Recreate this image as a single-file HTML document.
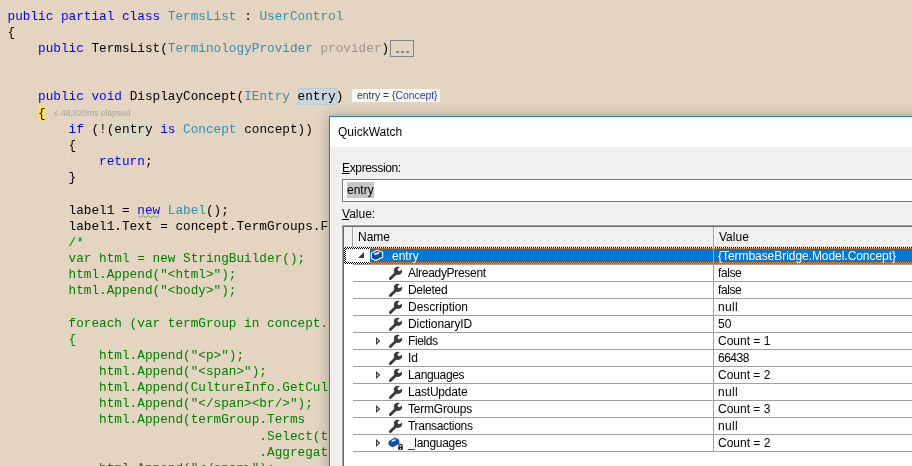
<!DOCTYPE html><html><head><meta charset="utf-8"><style>

html,body{margin:0;padding:0;width:912px;height:466px;overflow:hidden;background:#e3d5c1;}
.code{position:absolute;left:0;top:0;width:912px;height:466px;}
.ln{position:absolute;left:7.5px;font-family:"Liberation Mono",monospace;font-size:12.73px;line-height:16.125px;height:16.125px;white-space:pre;color:#000;}
.sans{font-family:"Liberation Sans",sans-serif;}
.abs{position:absolute;}

</style></head><body>
<svg width="0" height="0" style="position:absolute"><defs><mask id="wm" maskUnits="userSpaceOnUse" x="0" y="0" width="20" height="18"><rect width="20" height="18" fill="#fff"/><circle cx="13.2" cy="5.6" r="1.6" fill="#000"/><path d="M12.4 4.6 L15.2 1.2 L18.5 4.2 L14.4 6.6 Z" fill="#000"/></mask></defs></svg>
<div class="code">
<div class="abs" style="left:298px;top:88px;width:39px;height:17px;background:#c9d7dc;box-shadow:inset 0 0 0 1px #bccbd3"></div>
<div class="abs" style="left:38px;top:105px;width:8px;height:16px;background:#fbe26c"></div>
<div class="abs" style="left:114px;top:121px;width:38px;height:16px;background:#dcdac6"></div>
<div class="abs" style="left:10px;top:42px;width:1px;height:424px;background:repeating-linear-gradient(#cacdd1 0 2px, transparent 2px 5px)"></div>
<div class="abs" style="left:41px;top:122px;width:1px;height:344px;background:repeating-linear-gradient(#cacdd1 0 2px, transparent 2px 5px)"></div>
<div class="abs" style="left:71px;top:153px;width:1px;height:19px;background:repeating-linear-gradient(#cacdd1 0 2px, transparent 2px 5px)"></div>
<div class="ln" style="top:8.545px"><span style="color:#0000ff">public partial class </span><span style="color:#2b91af">TermsList</span><span style="color:#000000"> : </span><span style="color:#2b91af">UserControl</span></div>
<div class="ln" style="top:24.545px"><span style="color:#000000">{</span></div>
<div class="ln" style="top:40.545px"><span style="color:#000000">    </span><span style="color:#0000ff">public </span><span style="color:#000000">TermsList(</span><span style="color:#2b91af">TerminologyProvider </span><span style="color:#9b948d">provider</span><span style="color:#000000">)</span></div>
<div class="ln" style="top:88.545px"><span style="color:#000000">    </span><span style="color:#0000ff">public void </span><span style="color:#000000">DisplayConcept(</span><span style="color:#2b91af">IEntry </span><span style="color:#000000">entry)</span></div>
<div class="ln" style="top:105.545px"><span style="color:#000000">    {</span></div>
<div class="ln" style="top:121.545px"><span style="color:#000000">        </span><span style="color:#0000ff">if </span><span style="color:#000000">(!(entry </span><span style="color:#0000ff">is </span><span style="color:#2b91af">Concept </span><span style="color:#000000">concept))</span></div>
<div class="ln" style="top:137.545px"><span style="color:#000000">        {</span></div>
<div class="ln" style="top:153.545px"><span style="color:#000000">            </span><span style="color:#0000ff">return</span><span style="color:#000000">;</span></div>
<div class="ln" style="top:169.545px"><span style="color:#000000">        }</span></div>
<div class="ln" style="top:202.545px"><span style="color:#000000">        label1 = </span><span style="color:#0000ff">new </span><span style="color:#2b91af">Label</span><span style="color:#000000">();</span></div>
<div class="ln" style="top:218.545px"><span style="color:#000000">        label1.Text = concept.TermGroups.F</span></div>
<div class="ln" style="top:234.545px"><span style="color:#008000">        /*</span></div>
<div class="ln" style="top:250.545px"><span style="color:#008000">        var html = new StringBuilder();</span></div>
<div class="ln" style="top:266.545px"><span style="color:#008000">        html.Append(&quot;&lt;html&gt;&quot;);</span></div>
<div class="ln" style="top:282.545px"><span style="color:#008000">        html.Append(&quot;&lt;body&gt;&quot;);</span></div>
<div class="ln" style="top:315.545px"><span style="color:#008000">        foreach (var termGroup in concept.</span></div>
<div class="ln" style="top:331.545px"><span style="color:#008000">        {</span></div>
<div class="ln" style="top:347.545px"><span style="color:#008000">            html.Append(&quot;&lt;p&gt;&quot;);</span></div>
<div class="ln" style="top:363.545px"><span style="color:#008000">            html.Append(&quot;&lt;span&gt;&quot;);</span></div>
<div class="ln" style="top:379.545px"><span style="color:#008000">            html.Append(CultureInfo.GetCul</span></div>
<div class="ln" style="top:395.545px"><span style="color:#008000">            html.Append(&quot;&lt;/span&gt;&lt;br/&gt;&quot;);</span></div>
<div class="ln" style="top:411.545px"><span style="color:#008000">            html.Append(termGroup.Terms</span></div>
<div class="ln" style="top:428.545px"><span style="color:#008000">                                 .Select(t</span></div>
<div class="ln" style="top:444.545px"><span style="color:#008000">                                 .Aggregat</span></div>
<div class="ln" style="top:460.545px"><span style="color:#008000">            html.Append(&quot;&lt;/span&gt;&quot;);</span></div>
<div class="abs" style="left:390px;top:40px;width:22px;height:15px;border:1px solid #858585"></div>
<div class="abs" style="left:396px;top:51px;width:3px;height:2px;background:#8a8a8a"></div>
<div class="abs" style="left:401px;top:51px;width:3px;height:2px;background:#8a8a8a"></div>
<div class="abs" style="left:406px;top:51px;width:3px;height:2px;background:#8a8a8a"></div>
<div class="abs sans" style="left:352px;top:89px;width:88px;height:13px;background:#fafafa;font-size:10.4px;line-height:13px;white-space:pre;color:#3a3a3a"><span style="position:absolute;left:5px;top:0">entry = <span style="color:#3333bb">{Concept}</span></span></div>
<div class="abs sans" style="left:54px;top:107px;font-size:8.5px;line-height:12px;color:#a9a199;white-space:pre">≤ 48,820ms elapsed</div>
<svg class="abs" style="left:136px;top:213px" width="26" height="7"><path d="M2 2.5 L4.6 4.8 L7.2 2.5 L9.8 4.8 L12.4 2.5 L15 4.8 L17.6 2.5 L20.2 4.8 L22.8 2.5" stroke="#4f9d4f" stroke-width="0.9" fill="none"/></svg>
</div>
<div class="abs" style="left:329px;top:116px;width:700px;height:400px;box-shadow:0 0 12px 1px rgba(60,45,25,.3);border:1px solid #1883b4;background:#f0f0f0"></div>
<div class="abs" style="left:330px;top:117px;width:600px;height:30px;background:#fff"></div>
<div class="abs sans" style="left:338px;top:125px;font-size:12px;line-height:14px;color:#000">QuickWatch</div>
<div class="abs sans" style="left:342px;top:161px;font-size:12px;line-height:14px;color:#000;letter-spacing:-0.35px"><span style="text-decoration:underline">E</span>xpression:</div>
<div class="abs" style="left:342px;top:179px;width:600px;height:21px;border:1px solid #7a7a7a;background:#fff"></div>
<div class="abs" style="left:347px;top:182px;width:27px;height:16px;background:#c6c6c6"></div>
<div class="abs sans" style="left:347px;top:183px;font-size:12px;line-height:14px;color:#000">entry</div>
<div class="abs sans" style="left:342px;top:207px;font-size:12px;line-height:14px;color:#000"><span style="text-decoration:underline">V</span>alue:</div>
<div class="abs" style="left:342px;top:225px;width:600px;height:300px;border-top:1px solid #a0a0a0;border-left:1px solid #a0a0a0;background:#fff"></div>
<div class="abs" style="left:343px;top:226px;width:600px;height:300px;border-top:1px solid #696969;border-left:1px solid #696969;background:#fff"></div>
<div class="abs" style="left:344px;top:227px;width:600px;height:20px;background:#f0f0f0"></div>
<div class="abs" style="left:344px;top:245px;width:600px;height:1px;background:#f8f8f8"></div>
<div class="abs" style="left:344px;top:246px;width:600px;height:1px;background:#d8d8d8"></div>
<div class="abs" style="left:352px;top:227px;width:1px;height:20px;background:#a0a0a0"></div>
<div class="abs" style="left:353px;top:227px;width:1px;height:19px;background:#fcfcfc"></div>
<div class="abs" style="left:714px;top:227px;width:1px;height:19px;background:#fcfcfc"></div>
<div class="abs" style="left:713px;top:227px;width:1px;height:20px;background:#a0a0a0"></div>
<div class="abs sans" style="left:358px;top:230px;font-size:12px;line-height:14px;color:#000">Name</div>
<div class="abs sans" style="left:719px;top:230px;font-size:12px;line-height:14px;color:#000">Value</div>
<div class="abs" style="left:370px;top:248px;width:600px;height:16px;background:#0078d7"></div>
<div class="abs" style="left:344px;top:247px;width:600px;height:2px;background:repeating-conic-gradient(#fff 0 25%, transparent 0 50%) 0 0/2px 2px;mix-blend-mode:difference"></div>
<div class="abs" style="left:344px;top:262px;width:600px;height:2px;background:repeating-conic-gradient(#fff 0 25%, transparent 0 50%) 0 0/2px 2px;mix-blend-mode:difference;background-position:1px 0"></div>
<div class="abs" style="left:344px;top:249px;width:2px;height:13px;background:repeating-conic-gradient(#fff 0 25%, transparent 0 50%) 0 0/2px 2px;mix-blend-mode:difference"></div>
<div class="abs" style="left:713px;top:247px;width:1px;height:17px;background:#a0a0a0"></div>
<div class="abs" style="left:353px;top:264px;width:600px;height:1px;background:#a0a0a0"></div>
<div class="abs sans" style="left:392px;top:249px;font-size:12px;line-height:14px;color:#fff;white-space:pre;letter-spacing:0px">entry</div>
<div class="abs sans" style="left:718px;top:249px;font-size:12px;line-height:14px;color:#fff;white-space:pre;letter-spacing:-0.05px">{TermbaseBridge.Model.Concept}</div>
<svg class="abs" style="left:358px;top:252px" width="7" height="7"><path d="M6 0 L6 6 L0 6 Z" fill="#3c3c3c"/></svg>
<svg class="abs" style="left:366px;top:246px" width="24" height="18" viewBox="0 0 24 18"><path d="M5.4 7.3 L11.2 4.2 L16.6 6.2 L16.6 11.2 L10 14.5 L5.4 12.4 Z" fill="#0a4f9e" stroke="#fff" stroke-width="1.1" stroke-linejoin="round"/><path d="M9 8.2 L12.6 6.9" stroke="#e8eef6" stroke-width="1.8" stroke-linecap="round"/></svg>
<div class="abs" style="left:353px;top:281px;width:600px;height:1px;background:#a0a0a0"></div>
<div class="abs" style="left:713px;top:265px;width:1px;height:17px;background:#a0a0a0"></div>
<div class="abs sans" style="left:408px;top:266px;font-size:12px;line-height:14px;color:#000;white-space:pre;letter-spacing:-0.3px">AlreadyPresent</div>
<div class="abs sans" style="left:718px;top:266px;font-size:12px;line-height:14px;color:#000;white-space:pre;letter-spacing:-0.4px">false</div>
<svg class="abs" style="left:386px;top:264px" width="20" height="18" viewBox="0 0 20 18"><g fill="#3a3a3a" mask="url(#wm)"><circle cx="12" cy="6.8" r="4.1"/><path d="M3.4 13.6 L9.6 7.6 L11.6 9.6 L5.4 15.6 A1.4 1.4 0 0 1 3.4 13.6 Z"/></g></svg>
<div class="abs" style="left:353px;top:298px;width:600px;height:1px;background:#a0a0a0"></div>
<div class="abs" style="left:713px;top:282px;width:1px;height:17px;background:#a0a0a0"></div>
<div class="abs sans" style="left:408px;top:283px;font-size:12px;line-height:14px;color:#000;white-space:pre;letter-spacing:-0.3px">Deleted</div>
<div class="abs sans" style="left:718px;top:283px;font-size:12px;line-height:14px;color:#000;white-space:pre;letter-spacing:-0.4px">false</div>
<svg class="abs" style="left:386px;top:281px" width="20" height="18" viewBox="0 0 20 18"><g fill="#3a3a3a" mask="url(#wm)"><circle cx="12" cy="6.8" r="4.1"/><path d="M3.4 13.6 L9.6 7.6 L11.6 9.6 L5.4 15.6 A1.4 1.4 0 0 1 3.4 13.6 Z"/></g></svg>
<div class="abs" style="left:353px;top:315px;width:600px;height:1px;background:#a0a0a0"></div>
<div class="abs" style="left:713px;top:299px;width:1px;height:17px;background:#a0a0a0"></div>
<div class="abs sans" style="left:408px;top:300px;font-size:12px;line-height:14px;color:#000;white-space:pre;letter-spacing:0px">Description</div>
<div class="abs sans" style="left:718px;top:300px;font-size:12px;line-height:14px;color:#000;white-space:pre;letter-spacing:0.3px">null</div>
<svg class="abs" style="left:386px;top:298px" width="20" height="18" viewBox="0 0 20 18"><g fill="#3a3a3a" mask="url(#wm)"><circle cx="12" cy="6.8" r="4.1"/><path d="M3.4 13.6 L9.6 7.6 L11.6 9.6 L5.4 15.6 A1.4 1.4 0 0 1 3.4 13.6 Z"/></g></svg>
<div class="abs" style="left:353px;top:332px;width:600px;height:1px;background:#a0a0a0"></div>
<div class="abs" style="left:713px;top:316px;width:1px;height:17px;background:#a0a0a0"></div>
<div class="abs sans" style="left:408px;top:317px;font-size:12px;line-height:14px;color:#000;white-space:pre;letter-spacing:-0.1px">DictionaryID</div>
<div class="abs sans" style="left:718px;top:317px;font-size:12px;line-height:14px;color:#000;white-space:pre;letter-spacing:0px">50</div>
<svg class="abs" style="left:386px;top:315px" width="20" height="18" viewBox="0 0 20 18"><g fill="#3a3a3a" mask="url(#wm)"><circle cx="12" cy="6.8" r="4.1"/><path d="M3.4 13.6 L9.6 7.6 L11.6 9.6 L5.4 15.6 A1.4 1.4 0 0 1 3.4 13.6 Z"/></g></svg>
<div class="abs" style="left:353px;top:349px;width:600px;height:1px;background:#a0a0a0"></div>
<div class="abs" style="left:713px;top:333px;width:1px;height:17px;background:#a0a0a0"></div>
<div class="abs sans" style="left:408px;top:334px;font-size:12px;line-height:14px;color:#000;white-space:pre;letter-spacing:-0.4px">Fields</div>
<div class="abs sans" style="left:718px;top:334px;font-size:12px;line-height:14px;color:#000;white-space:pre;letter-spacing:0px">Count = 1</div>
<svg class="abs" style="left:374px;top:333px" width="10" height="17"><path d="M2 4 L6.3 8 L2 12 Z M3.2 6.6 L3.2 9.4 L4.7 8 Z" fill="#3a3a3a" fill-rule="evenodd"/></svg>
<svg class="abs" style="left:386px;top:332px" width="20" height="18" viewBox="0 0 20 18"><g fill="#3a3a3a" mask="url(#wm)"><circle cx="12" cy="6.8" r="4.1"/><path d="M3.4 13.6 L9.6 7.6 L11.6 9.6 L5.4 15.6 A1.4 1.4 0 0 1 3.4 13.6 Z"/></g></svg>
<div class="abs" style="left:353px;top:366px;width:600px;height:1px;background:#a0a0a0"></div>
<div class="abs" style="left:713px;top:350px;width:1px;height:17px;background:#a0a0a0"></div>
<div class="abs sans" style="left:408px;top:351px;font-size:12px;line-height:14px;color:#000;white-space:pre;letter-spacing:0px">Id</div>
<div class="abs sans" style="left:718px;top:351px;font-size:12px;line-height:14px;color:#000;white-space:pre;letter-spacing:-0.5px">66438</div>
<svg class="abs" style="left:386px;top:349px" width="20" height="18" viewBox="0 0 20 18"><g fill="#3a3a3a" mask="url(#wm)"><circle cx="12" cy="6.8" r="4.1"/><path d="M3.4 13.6 L9.6 7.6 L11.6 9.6 L5.4 15.6 A1.4 1.4 0 0 1 3.4 13.6 Z"/></g></svg>
<div class="abs" style="left:353px;top:383px;width:600px;height:1px;background:#a0a0a0"></div>
<div class="abs" style="left:713px;top:367px;width:1px;height:17px;background:#a0a0a0"></div>
<div class="abs sans" style="left:408px;top:368px;font-size:12px;line-height:14px;color:#000;white-space:pre;letter-spacing:-0.35px">Languages</div>
<div class="abs sans" style="left:718px;top:368px;font-size:12px;line-height:14px;color:#000;white-space:pre;letter-spacing:0px">Count = 2</div>
<svg class="abs" style="left:374px;top:367px" width="10" height="17"><path d="M2 4 L6.3 8 L2 12 Z M3.2 6.6 L3.2 9.4 L4.7 8 Z" fill="#3a3a3a" fill-rule="evenodd"/></svg>
<svg class="abs" style="left:386px;top:366px" width="20" height="18" viewBox="0 0 20 18"><g fill="#3a3a3a" mask="url(#wm)"><circle cx="12" cy="6.8" r="4.1"/><path d="M3.4 13.6 L9.6 7.6 L11.6 9.6 L5.4 15.6 A1.4 1.4 0 0 1 3.4 13.6 Z"/></g></svg>
<div class="abs" style="left:353px;top:400px;width:600px;height:1px;background:#a0a0a0"></div>
<div class="abs" style="left:713px;top:384px;width:1px;height:17px;background:#a0a0a0"></div>
<div class="abs sans" style="left:408px;top:385px;font-size:12px;line-height:14px;color:#000;white-space:pre;letter-spacing:-0.2px">LastUpdate</div>
<div class="abs sans" style="left:718px;top:385px;font-size:12px;line-height:14px;color:#000;white-space:pre;letter-spacing:0.3px">null</div>
<svg class="abs" style="left:386px;top:383px" width="20" height="18" viewBox="0 0 20 18"><g fill="#3a3a3a" mask="url(#wm)"><circle cx="12" cy="6.8" r="4.1"/><path d="M3.4 13.6 L9.6 7.6 L11.6 9.6 L5.4 15.6 A1.4 1.4 0 0 1 3.4 13.6 Z"/></g></svg>
<div class="abs" style="left:353px;top:417px;width:600px;height:1px;background:#a0a0a0"></div>
<div class="abs" style="left:713px;top:401px;width:1px;height:17px;background:#a0a0a0"></div>
<div class="abs sans" style="left:408px;top:402px;font-size:12px;line-height:14px;color:#000;white-space:pre;letter-spacing:-0.2px">TermGroups</div>
<div class="abs sans" style="left:718px;top:402px;font-size:12px;line-height:14px;color:#000;white-space:pre;letter-spacing:0px">Count = 3</div>
<svg class="abs" style="left:374px;top:401px" width="10" height="17"><path d="M2 4 L6.3 8 L2 12 Z M3.2 6.6 L3.2 9.4 L4.7 8 Z" fill="#3a3a3a" fill-rule="evenodd"/></svg>
<svg class="abs" style="left:386px;top:400px" width="20" height="18" viewBox="0 0 20 18"><g fill="#3a3a3a" mask="url(#wm)"><circle cx="12" cy="6.8" r="4.1"/><path d="M3.4 13.6 L9.6 7.6 L11.6 9.6 L5.4 15.6 A1.4 1.4 0 0 1 3.4 13.6 Z"/></g></svg>
<div class="abs" style="left:353px;top:434px;width:600px;height:1px;background:#a0a0a0"></div>
<div class="abs" style="left:713px;top:418px;width:1px;height:17px;background:#a0a0a0"></div>
<div class="abs sans" style="left:408px;top:419px;font-size:12px;line-height:14px;color:#000;white-space:pre;letter-spacing:-0.3px">Transactions</div>
<div class="abs sans" style="left:718px;top:419px;font-size:12px;line-height:14px;color:#000;white-space:pre;letter-spacing:0.3px">null</div>
<svg class="abs" style="left:386px;top:417px" width="20" height="18" viewBox="0 0 20 18"><g fill="#3a3a3a" mask="url(#wm)"><circle cx="12" cy="6.8" r="4.1"/><path d="M3.4 13.6 L9.6 7.6 L11.6 9.6 L5.4 15.6 A1.4 1.4 0 0 1 3.4 13.6 Z"/></g></svg>
<div class="abs" style="left:353px;top:451px;width:600px;height:1px;background:#a0a0a0"></div>
<div class="abs" style="left:713px;top:435px;width:1px;height:17px;background:#a0a0a0"></div>
<div class="abs sans" style="left:408px;top:436px;font-size:12px;line-height:14px;color:#000;white-space:pre;letter-spacing:-0.3px">_languages</div>
<div class="abs sans" style="left:718px;top:436px;font-size:12px;line-height:14px;color:#000;white-space:pre;letter-spacing:0px">Count = 2</div>
<svg class="abs" style="left:374px;top:435px" width="10" height="17"><path d="M2 4 L6.3 8 L2 12 Z M3.2 6.6 L3.2 9.4 L4.7 8 Z" fill="#3a3a3a" fill-rule="evenodd"/></svg>
<svg class="abs" style="left:386px;top:435px" width="20" height="17" viewBox="0 0 20 17"><path d="M2.9 6.5 L8.6 2.9 L12.7 4.7 L13.2 8.4 L6.8 11.9 L3 10 Z" fill="#0a52a6" stroke="#0a52a6" stroke-width="0.8" stroke-linejoin="round"/><path d="M6.4 5.9 L9 5" stroke="#e0e8f2" stroke-width="1.7" stroke-linecap="round"/><path d="M12.8 11.6 V10.9 A1.7 1.6 0 0 1 16.2 10.9 V11.6" stroke="#222" stroke-width="1.2" fill="none"/><rect x="12.1" y="11.4" width="4.8" height="3.4" fill="#222"/><rect x="14" y="12.9" width="1.1" height="1" fill="#fff"/></svg>
</body></html>
